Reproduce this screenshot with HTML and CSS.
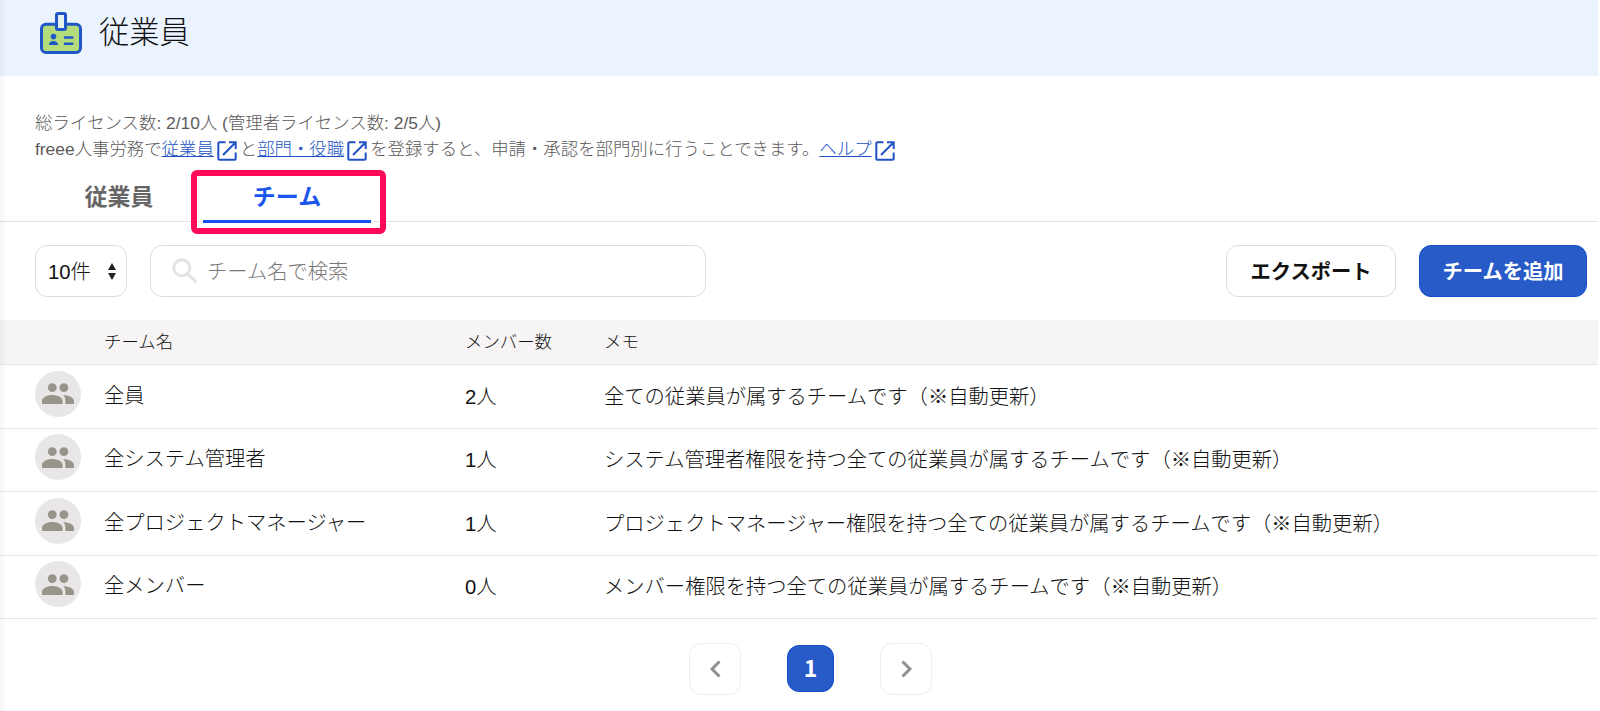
FILE: index.html
```html
<!DOCTYPE html>
<html lang="ja">
<head>
    <meta charset="UTF-8">
    <meta name="viewport" content="width=device-width, initial-scale=1.0">
    <title>従業員</title>
    <link rel="stylesheet" href="styles.css">
</head>
<body>

    <svg class="sprite">
        <symbol id="external" viewBox="0 0 20 20">
            <path d="M8.5 1.3H2.3a1 1 0 0 0-1 1v15.4a1 1 0 0 0 1 1h15.4a1 1 0 0 0 1-1v-6.2" fill="none" stroke="currentColor" stroke-width="2"/>
            <path d="M6 14 17.5 2.5M12 1.3h6.7V8" fill="none" stroke="currentColor" stroke-width="2"/>
        </symbol>
        <symbol id="people" viewBox="0 0 32 21">
            <circle cx="10.3" cy="4.6" r="4.4"/>
            <circle cx="21.9" cy="4.6" r="4.4"/>
            <path d="M0 21v-3c0-4 6-6 10.3-6s10.3 2 10.3 6v3z"/>
            <path d="M21.2 12c4.6.2 10.8 2 10.8 6v3h-8.6v-3c0-2.600-.8-4.500-2.200-6z"/>
        </symbol>
    </svg>

    <header class="header">
        <svg class="logo" width="42" height="42" viewBox="0 0 42 42">
            <rect x="1.500" y="12.200" width="39" height="28.300" rx="4.500" fill="#b4dc7a" stroke="#1f57c8" stroke-width="3"/>
            <rect x="16.500" y="1.500" width="9" height="16" rx="1.500" fill="#e6f0ec" stroke="#1f57c8" stroke-width="3"/>
            <circle cx="13.500" cy="24.600" r="2.800" fill="#1f57c8"/>
            <path d="M9 33c0-2.800 1.800-4 4.500-4s4.500 1.200 4.500 4z" fill="#1f57c8"/>
            <path d="M25 25.500h7.300M25 31.800h7.300" stroke="#1f57c8" stroke-width="2.500" stroke-linecap="round"/>
        </svg>
        <h1>従業員</h1>
    </header>

    <div class="notes">
        <p>総ライセンス数: 2/10人 (管理者ライセンス数: 2/5人)</p>
        <p>freee人事労務で<a href="#">従業員</a><svg class="external"><use href="#external"/></svg>と<a href="#">部門・役職</a><svg class="external"><use href="#external"/></svg>を登録すると、申請・承認を部門別に行うことできます。<a href="#">ヘルプ</a><svg class="external"><use href="#external"/></svg></p>
    </div>

    <nav class="tabs">
        <a class="tab" href="#">従業員</a>
        <a class="tab active" href="#">チーム<span class="highlight"></span></a>
    </nav>

    <div class="toolbar">
        <button class="select">10件
            <svg width="8" height="17" viewBox="0 0 8 17"><path d="M4 0l4 7H0zM4 17l4-7H0z" fill="#222"/></svg>
        </button>
        <div class="search">
            <svg width="26" height="26" viewBox="0 0 26 26" fill="none" stroke="#e4e2e2" stroke-width="3">
                <circle cx="9.800" cy="9.800" r="8"/>
                <path d="M15.500 15.500l9 9"/>
            </svg>
            <span>チーム名で検索</span>
        </div>
        <button class="button">エクスポート</button>
        <button class="button primary">チームを追加</button>
    </div>

    <div class="table">
        <div class="row head">
            <span></span><span>チーム名</span><span>メンバー数</span><span>メモ</span>
        </div>
        <div class="row">
            <span class="avatar"><svg><use href="#people"/></svg></span>
            <span class="name">全員</span><span>2人</span>
            <span>全ての従業員が属するチームです（※自動更新）</span>
        </div>
        <div class="row">
            <span class="avatar"><svg><use href="#people"/></svg></span>
            <span class="name">全システム管理者</span><span>1人</span>
            <span>システム管理者権限を持つ全ての従業員が属するチームです（※自動更新）</span>
        </div>
        <div class="row">
            <span class="avatar"><svg><use href="#people"/></svg></span>
            <span class="name">全プロジェクトマネージャー</span><span>1人</span>
            <span>プロジェクトマネージャー権限を持つ全ての従業員が属するチームです（※自動更新）</span>
        </div>
        <div class="row">
            <span class="avatar"><svg><use href="#people"/></svg></span>
            <span class="name">全メンバー</span><span>0人</span>
            <span>メンバー権限を持つ全ての従業員が属するチームです（※自動更新）</span>
        </div>
    </div>

    <div class="pagination">
        <button class="page"><svg width="11" height="18" viewBox="0 0 11 18"><path d="M9.500 1.500L2 9l7.500 7.500"/></svg></button>
        <button class="page current">1</button>
        <button class="page"><svg width="11" height="18" viewBox="0 0 11 18"><path d="M1.500 1.500L9 9l-7.500 7.500"/></svg></button>
    </div>

</body>
</html>
```
FILE: styles.css
```css
* {
    box-sizing: border-box;
}
body {
    margin: 0;
    width: 1598px;
    height: 711px;
    overflow: hidden;
    position: relative;
    color: #111;
    font-family: "Liberation Sans", "Noto Sans CJK JP", sans-serif;
    font-size: 20.3px;
    font-weight: 300;
    background-color: #fff;
}
/* soft shadow along the left edge */
body::before {
    content: "";
    position: absolute;
    left: 0;
    top: 0;
    width: 6px;
    height: 100%;
    background: linear-gradient(to right, rgba(0, 0, 0, 0.04), transparent);
}
button {
    font: inherit;
    color: inherit;
    padding: 0;
}
.sprite {
    display: none;
}
.header {
    display: flex;
    height: 76px;
    padding: 12px 0 0 40px;
    gap: 17px;
    background-color: #ebf3ff;
}
.header h1 {
    margin: 0;
    font-size: 30.3px;
    font-weight: 300;
    line-height: 41px;
}
.notes {
    padding: 34px 0 0 35px;
    height: 93px;
    font-size: 17.4px;
    color: #5c5a5a;
}
.notes p {
    display: flex;
    align-items: center;
    margin: 0;
    height: 26px;
    line-height: 26px;
    white-space: nowrap;
}
.notes a {
    color: #2152c4;
}
.external {
    width: 20px;
    height: 20px;
    margin: 3px 3px 0;
    color: #2152c4;
}
.tabs {
    display: flex;
    height: 53px;
    padding-left: 35px;
    border-bottom: 1px solid #e4e2e2;
}
.tab {
    position: relative;
    width: 168px;
    height: 54px;
    line-height: 56px;
    font-size: 23px;
    font-weight: bold;
    text-align: center;
    text-decoration: none;
    color: #666;
}
.tab.active {
    color: #1a56ee;
    border-bottom: 3px solid #1150ee;
}
.highlight {
    position: absolute;
    left: -12px;
    top: 1px;
    width: 195px;
    height: 64px;
    border: 6px solid #ff0a58;
    border-radius: 6px;
}
.toolbar {
    display: flex;
    height: 98px;
    padding: 23px 11px 0 35px;
}
.select, .search, .button {
    display: flex;
    align-items: center;
    height: 52px;
    border: 1px solid #dedcdc;
    border-radius: 12px;
    background-color: #fff;
}
.select {
    width: 92px;
    justify-content: space-between;
    padding: 0 10px 3px 12px;
}
.select svg {
    margin-top: 3px;
}
.search {
    width: 556px;
    margin: 0 auto 0 23px;
    padding-left: 21px;
    gap: 9px;
    color: #777;
}
.search span {
    margin-top: -3px;
}
.button {
    justify-content: center;
    width: 170px;
    padding-bottom: 3px;
    font-weight: bold;
}
.button.primary {
    width: 168px;
    margin-left: 23px;
    border-color: #1550c8;
    background-color: #285ac8;
    color: #fff;
}
.row {
    display: grid;
    grid-template-columns: 69px 361px 139px 1fr;
    align-items: center;
    height: 63.5px;
    padding: 0 0 3px 35px;
    border-bottom: 1px solid #e6e4e4;
    white-space: nowrap;
}
.row.head {
    height: 45px;
    font-size: 17.4px;
    background-color: #f6f4f4;
}
.row .name {
    margin-top: -2px;
}
.avatar {
    display: flex;
    align-items: center;
    justify-content: center;
    width: 46px;
    height: 46px;
    margin-top: -2px;
    border-radius: 50%;
    background-color: #e8e6e6;
    fill: #99948a;
}
.avatar svg {
    width: 32px;
    height: 21px;
}
.pagination {
    display: flex;
    align-items: center;
    justify-content: center;
    gap: 46px;
    height: 92px;
    padding: 8px 0 0 23px;
    border-bottom: 1px solid #f6f4f4;
}
.page {
    display: flex;
    align-items: center;
    justify-content: center;
    width: 52px;
    height: 52px;
    border: 1px solid #efeded;
    border-radius: 12px;
    background-color: #fff;
    fill: none;
    stroke: #8f8f8f;
    stroke-width: 3;
}
.page.current {
    width: 47px;
    height: 47px;
    padding-bottom: 3px;
    border-color: #1550c8;
    background-color: #285ac8;
    color: #fff;
    font-family: "Noto Sans CJK JP", sans-serif;
    font-size: 23px;
    font-weight: bold;
}
```
